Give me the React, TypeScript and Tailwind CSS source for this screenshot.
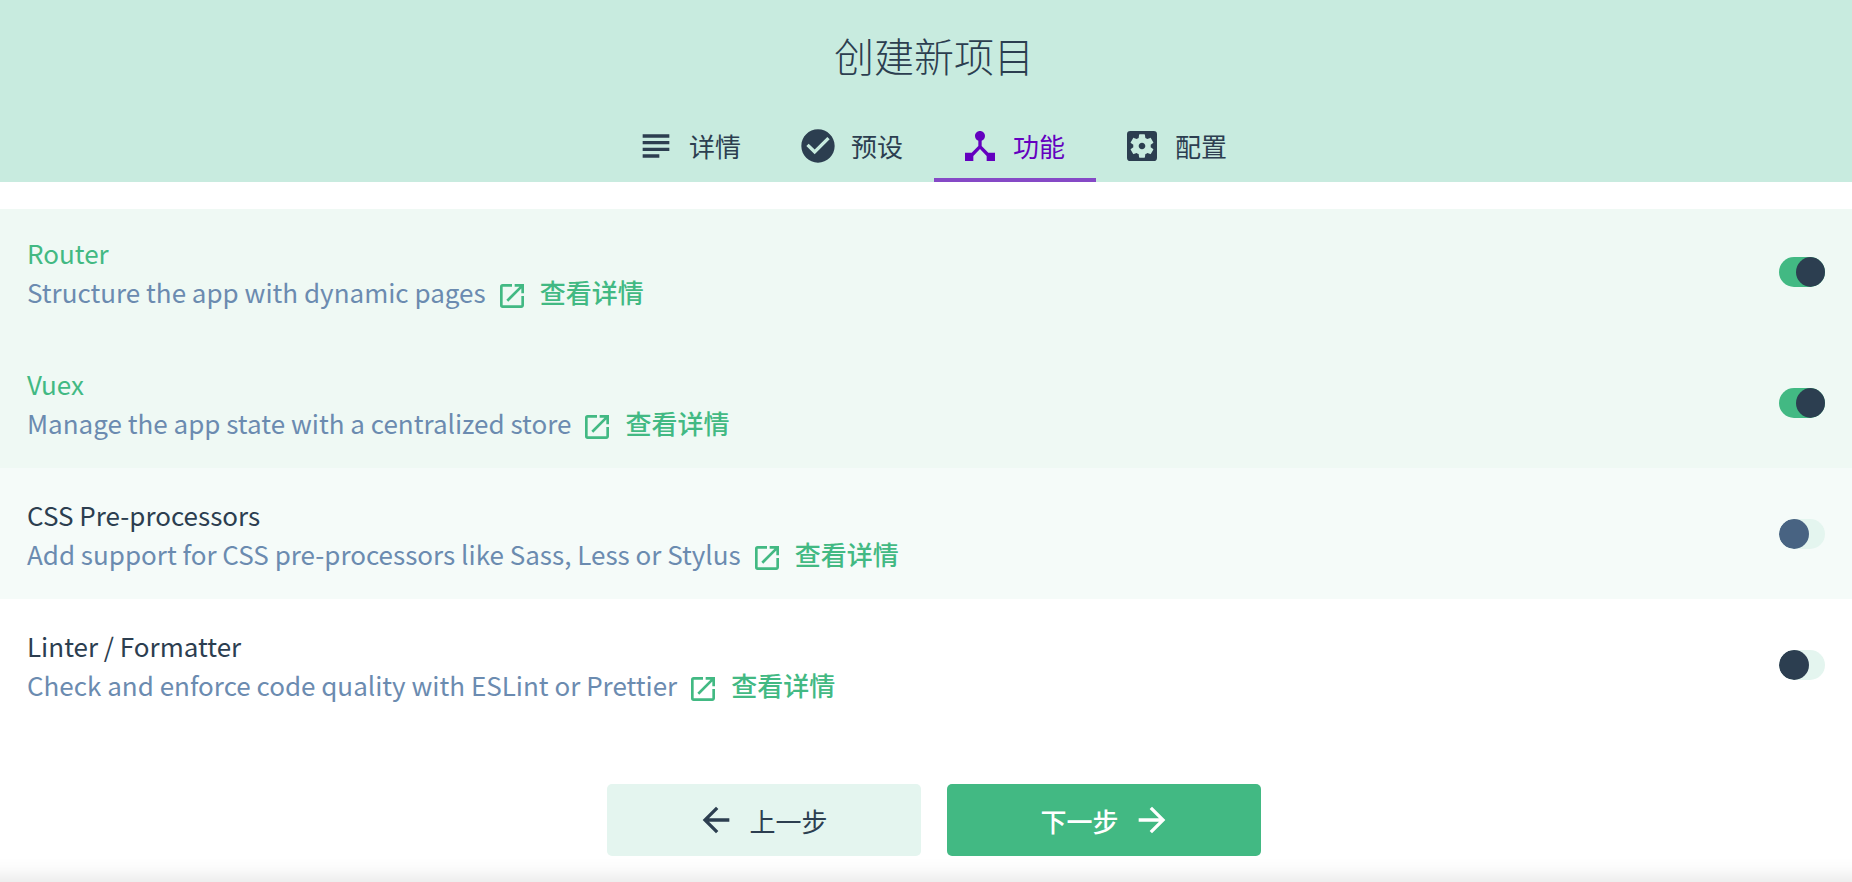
import { useState } from "react";
import {
  MdArrowBack,
  MdArrowForward,
  MdCheckCircle,
  MdDeviceHub,
  MdOpenInNew,
  MdSettingsApplications,
  MdSubject,
} from "react-icons/md";

const tabs = [
  { label: "详情", Icon: MdSubject },
  { label: "预设", Icon: MdCheckCircle },
  { label: "功能", Icon: MdDeviceHub },
  { label: "配置", Icon: MdSettingsApplications },
];

const features = [
  { id: "router", name: "Router", description: "Structure the app with dynamic pages", enabled: true },
  { id: "vuex", name: "Vuex", description: "Manage the app state with a centralized store", enabled: true },
  {
    id: "css",
    name: "CSS Pre-processors",
    description: "Add support for CSS pre-processors like Sass, Less or Stylus",
    enabled: false,
    highlighted: true,
  },
  {
    id: "linter",
    name: "Linter / Formatter",
    description: "Check and enforce code quality with ESLint or Prettier",
    enabled: false,
  },
];

type Feature = (typeof features)[number];

function FeatureRow({ feature }: { feature: Feature }) {
  const [on, setOn] = useState(feature.enabled);
  const background = on ? "bg-[#eff9f4]" : feature.highlighted ? "bg-[#f5fbf9]" : "bg-white";
  const knob = feature.highlighted ? "before:bg-[#486382]" : "before:bg-[#2c3e50]";
  return (
    <li className={`flex items-center justify-between px-[27px] pt-[27px] pb-[26px] first:pt-[24px] ${background}`}>
      <div className="text-[26px] leading-[39px]">
        <label htmlFor={feature.id} className={`block w-fit ${on ? "text-[#42b983]" : "text-[#2c3e50]"}`}>
          {feature.name}
        </label>
        <div className="flex items-center text-[#6b8bb0]">
          <span>{feature.description}</span>
          <a href="#" className="ml-[10px] flex h-[39px] items-center gap-3 font-medium text-[#42b983]">
            <MdOpenInNew className="mt-2 size-8" />
            查看详情
          </a>
        </div>
      </div>
      <input
        id={feature.id}
        type="checkbox"
        checked={on}
        onChange={(e) => setOn(e.target.checked)}
        className={`h-[30px] w-[46px] shrink-0 cursor-pointer appearance-none overflow-hidden rounded-full bg-[#e4f5ef] before:block before:size-[30px] before:rounded-full checked:bg-[#42b983] checked:before:ml-[17px] ${knob}`}
      />
    </li>
  );
}

export default function App() {
  const [active, setActive] = useState(2);
  return (
    <div className="relative flex min-h-screen flex-col overflow-hidden bg-white font-['Noto_Sans_CJK_SC',sans-serif] text-[#2c3e50]">
      <header className="flex flex-col items-center bg-[#c8ebdf] pl-4">
        <h1 className="pt-[25px] text-[40px] leading-[60px] font-light">创建新项目</h1>
        <nav className="mt-[27px] flex">
          {tabs.map(({ label, Icon }, i) => (
            <button
              key={label}
              type="button"
              onClick={() => setActive(i)}
              className={`flex h-[70px] w-[162px] items-center gap-[13px] border-b-4 pt-px pl-[26px] text-[26px] ${
                i === active ? "border-[#8549c6] text-[#6400bf]" : "border-transparent"
              }`}
            >
              <Icon className="size-[40px]" />
              {label}
            </button>
          ))}
        </nav>
      </header>

      <ul className="mt-[27px]">
        {features.map((feature) => (
          <FeatureRow key={feature.id} feature={feature} />
        ))}
      </ul>

      <footer className="mt-[54px] flex justify-center gap-[26px] pb-[26px] pl-4 text-[26px]">
        <button
          type="button"
          className="flex h-[72px] w-[314px] items-center justify-center gap-[13px] rounded-[5px] bg-[#e4f5ef] pr-1"
        >
          <MdArrowBack className="size-[40px]" />
          上一步
        </button>
        <button
          type="button"
          className="flex h-[72px] w-[314px] items-center justify-center gap-[13px] rounded-[5px] bg-[#42b983] pl-1 font-medium text-white"
        >
          下一步
          <MdArrowForward className="size-[40px]" />
        </button>
      </footer>
      <div className="pointer-events-none absolute -inset-x-10 top-full h-10 shadow-[0_0_26px_rgba(0,0,0,0.14)]" />
    </div>
  );
}
